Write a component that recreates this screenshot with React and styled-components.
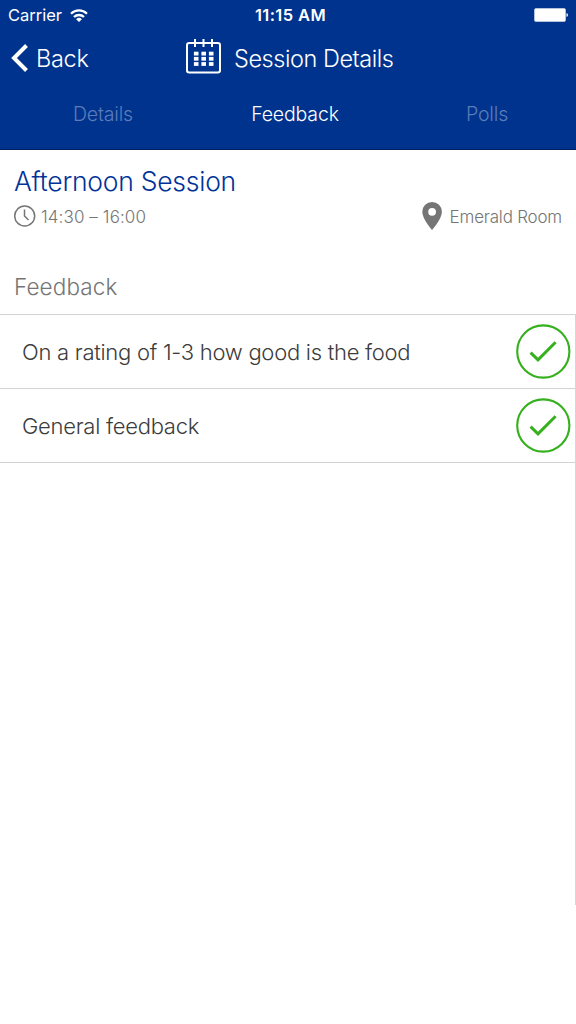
import styled, { createGlobalStyle } from 'styled-components';

const GlobalStyle = createGlobalStyle`
  * {
    box-sizing: border-box;
  }
  body {
    margin: 0;
    background: #ffffff;
    font-family: Inter, "Liberation Sans", sans-serif;
    font-weight: 300;
  }
`;

const Screen = styled.div`
   width: 576px;
   height: 1024px;
   overflow: hidden;
   background: #ffffff;
`;

const Header = styled.header`
   height: 150px;
   background: #00338d;
   border-bottom: 1px solid #001f5c;
   color: #ffffff;
`;

const StatusBar = styled.div`
   display: grid;
   grid-template-columns: 1fr auto 1fr;
   align-items: center;
   height: 29px;
   padding: 0 8px;
   font-size: 16.5px;
   line-height: 29px;
`;

const Carrier = styled.div`
   display: flex;
   align-items: center;
   gap: 8px;
   padding-top: 1px;
   font-weight: 400;
`;

const Clock = styled.div`
   padding: 0 0 0 5px;
   font-weight: 600;
   letter-spacing: 0.4px;
`;

const Battery = styled.svg`
   justify-self: end;
`;

const NavBar = styled.div`
   display: flex;
   height: 57px;
   font-size: 23.5px;
   line-height: 60px;
`;

const BackButton = styled.div`
   display: flex;
   width: 185px;
   padding-left: 11px;
   letter-spacing: -0.3px;

   & svg {
      margin: 15px 7px 0 0;
   }
`;

const NavTitle = styled.div`
   display: flex;
   letter-spacing: -0.45px;

   & svg {
      margin: 10px 12px 0 0;
   }
`;

const Tabs = styled.nav`
   display: grid;
   grid-template-columns: 206px 178px 206px;
   text-align: center;
   font-size: 19.5px;
   line-height: 57px;
`;

const Tab = styled.div`
   color: ${props => props.$active ? '#ffffff' : '#5c7cb8'};
   letter-spacing: -0.15px;
`;

const Summary = styled.section`
   height: 111px;
   padding: 13px 14px 0;
`;

const SessionName = styled.h1`
   margin: 0;
   color: #003399;
   font-size: 26.5px;
   font-weight: 300;
   line-height: 36px;
   letter-spacing: -0.25px;
`;

const Meta = styled.div`
   display: flex;
   justify-content: space-between;
   height: 34px;
   color: #757575;
   font-size: 17px;
`;

const MetaItem = styled.div`
   display: flex;
   align-items: center;
   gap: ${props => props.$gap};
   letter-spacing: ${props => props.$tracking};

   & span {
      padding-top: 1px;
   }
`;

const SectionTitle = styled.h2`
   height: 53px;
   margin: 0;
   padding-left: 14px;
   color: #757575;
   font-size: 22.5px;
   font-weight: 300;
   line-height: 51px;
   letter-spacing: 0.1px;
`;

const List = styled.div`
   height: 591px;
   border-right: 1px solid #d6d6d6;
`;

const Row = styled.div`
   display: flex;
   align-items: center;
   justify-content: space-between;
   height: 74px;
   padding: 0 4px 0 22px;
   border-bottom: 1px solid #d3d3d3;
   color: #3c3c3c;
   font-size: 22px;
   letter-spacing: -0.27px;

   &:first-child {
      height: 75px;
      border-top: 1px solid #d3d3d3;
   }
`;

function WifiIcon() {
  return (
    <svg width="18" height="13" viewBox="0 0 18 13" fill="none" stroke="#fff" strokeWidth="2.3">
      <path d="M1 4.7a11.4 11.4 0 0 1 16 0" />
      <path d="M4 8a7.2 7.2 0 0 1 10 0" />
      <path d="M9 13 6.1 10.2a4.2 4.2 0 0 1 5.8 0Z" fill="#fff" stroke="none" />
    </svg>
  );
}

function CalendarIcon() {
  const rows = [12.7, 17.9, 23.1];
  const columns = [8.9, 16.4, 23.9];
  return (
    <svg width="37" height="35" viewBox="0 0 37 35" fill="none" stroke="#fff" strokeWidth="2">
      <rect x="2" y="4" width="33" height="29.5" rx="2.2" />
      <path d="M10 0v8M18.5 0v8M27 0v8" />
      {rows.map( y => columns.map( x =>
        <rect key={x + '-' + y} x={x} y={y} width="4.6" height="3.8" fill="#fff" stroke="none" />
      ))}
    </svg>
  );
}

function ClockIcon() {
  return (
    <svg width="22" height="22" viewBox="0 0 22 22" fill="none" stroke="#757575" strokeWidth="1.5">
      <circle cx="10.7" cy="11" r="10" />
      <path d="M10.5 4.5v6.5l4 4" />
    </svg>
  );
}

function PinIcon() {
  return (
    <svg width="21" height="28" viewBox="0 0 21 28">
      <path fillRule="evenodd" fill="#757575" d="M10.1 0A9.8 9.8 0 0 0 .3 9.8C.3 17 10.1 28 10.1 28s9.8-11 9.8-18.2A9.8 9.8 0 0 0 10.1 0Zm0 13.7a3.9 3.9 0 1 1 0-7.800 3.9 3.9 0 0 1 0 7.800Z" />
    </svg>
  );
}

function CheckIcon() {
  return (
    <svg width="55" height="55" viewBox="0 0 55 55" fill="none" stroke="#36b01e">
      <circle cx="27.3" cy="27.5" r="26.1" strokeWidth="2.1" />
      <path d="M14.6 28.6 22 35.8 39.6 18.2" strokeWidth="3" />
    </svg>
  );
}

const questions = [
  { id: 1, title: 'On a rating of 1-3 how good is the food' },
  { id: 2, title: 'General feedback' },
];

function App() {
    return (
        <Screen>
            <GlobalStyle />
            <Header>
                <StatusBar>
                    <Carrier>Carrier <WifiIcon /></Carrier>
                    <Clock>11:15 AM</Clock>
                    <Battery width="34" height="14" viewBox="0 0 34 14">
                        <rect x=".5" y=".5" width="31" height="13" rx="1.5" fill="#fff" stroke="#b3c2dd" />
                        <path d="M32.5 5v4q1.5-.5 1.5-2t-1.5-2" fill="#fff" />
                    </Battery>
                </StatusBar>
                <NavBar>
                    <BackButton>
                        <svg width="18" height="28" viewBox="0 0 18 28" fill="none" stroke="#fff" strokeWidth="4">
                            <path d="M15.5 1.5 3 14l12.5 12.5" />
                        </svg>
                        Back
                    </BackButton>
                    <NavTitle>
                        <CalendarIcon />
                        Session Details
                    </NavTitle>
                </NavBar>
                <Tabs>
                    <Tab>Details</Tab>
                    <Tab $active>Feedback</Tab>
                    <Tab>Polls</Tab>
                </Tabs>
            </Header>
            <Summary>
                <SessionName>Afternoon Session</SessionName>
                <Meta>
                    <MetaItem $gap="5px" $tracking="0.1px">
                        <ClockIcon />
                        <span>14:30 – 16:00</span>
                    </MetaItem>
                    <MetaItem $gap="7px" $tracking="-0.2px">
                        <PinIcon />
                        <span>Emerald Room</span>
                    </MetaItem>
                </Meta>
            </Summary>
            <SectionTitle>Feedback</SectionTitle>
            <List>
                {questions.map( q =>
                <Row key={q.id}>
                    {q.title}
                    <CheckIcon />
                </Row>
                )}
            </List>
        </Screen>
    );
}

export default App;
